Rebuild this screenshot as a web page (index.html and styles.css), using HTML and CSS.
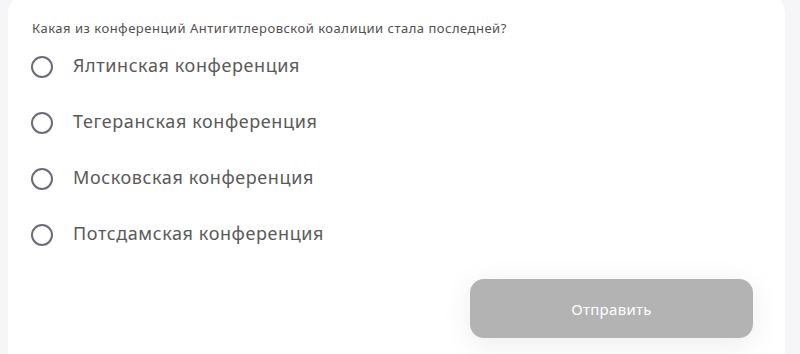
FILE: index.html
```
<!DOCTYPE html>
<html lang="ru">
<head>
  <meta charset="utf-8"/>
  <title>Тест</title>
  <link rel="stylesheet" href="styles.css">
</head>
<body>
  <div class="card">
    <p class="question">Какая из конференций Антигитлеровской коалиции стала последней?</p>
    <form class="answers">
      <label class="answer"><input type="radio" name="q"><span class="mark"></span><span class="answer-text">Ялтинская конференция</span></label>
      <label class="answer"><input type="radio" name="q"><span class="mark"></span><span class="answer-text">Тегеранская конференция</span></label>
      <label class="answer"><input type="radio" name="q"><span class="mark"></span><span class="answer-text">Московская конференция</span></label>
      <label class="answer"><input type="radio" name="q"><span class="mark"></span><span class="answer-text">Потсдамская конференция</span></label>
      <div class="actions">
        <button type="button" class="submit">Отправить</button>
      </div>
    </form>
  </div>
</body>
</html>
```
FILE: styles.css
```
html, body {
  margin: 0;
  height: 100%;
  overflow: hidden;
}

body {
  background-color: #f6f6f8;
  font-family: "Noto Sans", "Lato", sans-serif;
  color: #555555;
}

.card {
  margin: -10px 15px 0 8px;
  padding: 29px 32px 0 24px;
  height: 400px;
  background-color: #ffffff;
  border-radius: 24px;
}

.question {
  margin: 0;
  font-size: 13px;
  line-height: 18px;
  letter-spacing: 0.5px;
  color: #505050;
}

.answers {
  margin: 2px 0 0 0;
}

.answer {
  display: flex;
  align-items: center;
  height: 56px;
  cursor: pointer;
}

.answer input {
  display: none;
}

.mark {
  width: 18px;
  height: 18px;
  border: 2px solid #6d6a7d;
  border-radius: 50%;
  flex-shrink: 0;
  margin-left: -1px;
}

.answer-text {
  margin-left: 20px;
  margin-top: -4px;
  font-size: 18px;
  letter-spacing: 0.6px;
  color: #595959;
}

.actions {
  display: flex;
  justify-content: flex-end;
  margin-top: 16px;
}

.submit {
  width: 283px;
  height: 59px;
  border: none;
  border-radius: 14px;
  background-color: #b3b3b3;
  color: #ffffff;
  font-family: inherit;
  font-size: 15px;
  letter-spacing: 0.3px;
  box-shadow: 0 6px 30px rgba(0, 0, 0, 0.08);
}
```
